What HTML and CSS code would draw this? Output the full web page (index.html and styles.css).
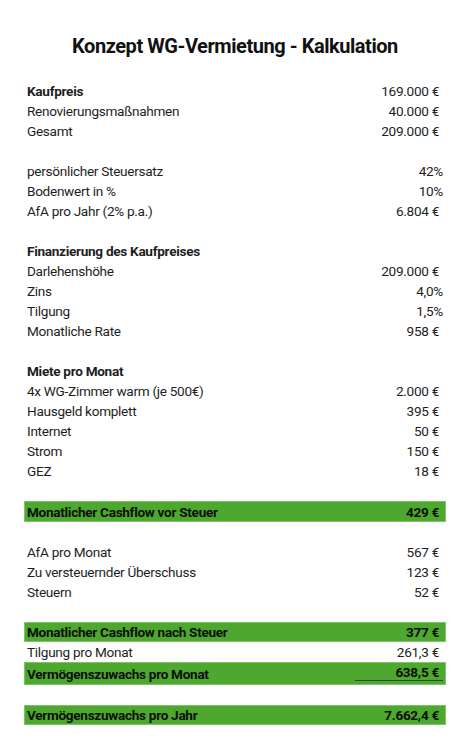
FILE: index.html
```html
<!DOCTYPE html>
<html lang="de">
<head>
<meta charset="utf-8">
<title>Konzept WG-Vermietung - Kalkulation</title>
<link rel="stylesheet" href="styles.css">
</head>
<body>
<div class="sheet">
  <h1 class="title">Konzept WG-Vermietung - Kalkulation</h1>
  <div class="table">
    <div class="row"><span class="label bold">Kaufpreis</span><span class="val">169.000 €</span></div>
    <div class="row"><span class="label">Renovierungsmaßnahmen</span><span class="val">40.000 €</span></div>
    <div class="row"><span class="label">Gesamt</span><span class="val">209.000 €</span></div>
    <div class="row"></div>
    <div class="row"><span class="label">persönlicher Steuersatz</span><span class="val pct">42%</span></div>
    <div class="row"><span class="label">Bodenwert in %</span><span class="val pct">10%</span></div>
    <div class="row"><span class="label">AfA pro Jahr (2% p.a.)</span><span class="val">6.804 €</span></div>
    <div class="row"></div>
    <div class="row"><span class="label bold">Finanzierung des Kaufpreises</span></div>
    <div class="row"><span class="label">Darlehenshöhe</span><span class="val">209.000 €</span></div>
    <div class="row"><span class="label">Zins</span><span class="val pct">4,0%</span></div>
    <div class="row"><span class="label">Tilgung</span><span class="val pct">1,5%</span></div>
    <div class="row"><span class="label">Monatliche Rate</span><span class="val">958 €</span></div>
    <div class="row"></div>
    <div class="row"><span class="label bold">Miete pro Monat</span></div>
    <div class="row"><span class="label">4x WG-Zimmer warm (je 500€)</span><span class="val">2.000 €</span></div>
    <div class="row"><span class="label">Hausgeld komplett</span><span class="val">395 €</span></div>
    <div class="row"><span class="label">Internet</span><span class="val">50 €</span></div>
    <div class="row"><span class="label">Strom</span><span class="val">150 €</span></div>
    <div class="row"><span class="label">GEZ</span><span class="val">18 €</span></div>
    <div class="row"></div>
    <div class="row green bold tall1"><span class="label">Monatlicher Cashflow vor Steuer</span><span class="val">429 €</span></div>
    <div class="row"></div>
    <div class="row"><span class="label">AfA pro Monat</span><span class="val">567 €</span></div>
    <div class="row"><span class="label">Zu versteuernder Überschuss</span><span class="val">123 €</span></div>
    <div class="row"><span class="label">Steuern</span><span class="val">52 €</span></div>
    <div class="row"></div>
    <div class="row green bold"><span class="label">Monatlicher Cashflow nach Steuer</span><span class="val">377 €</span></div>
    <div class="row"><span class="label">Tilgung pro Monat</span><span class="val">261,3 €</span></div>
    <div class="row green bold tall2"><span class="label">Vermögenszuwachs pro Monat</span><span class="val sum">638,5 €</span></div>
    <div class="row"></div>
    <div class="row green bold"><span class="label">Vermögenszuwachs pro Jahr</span><span class="val">7.662,4 €</span></div>
  </div>
</div>
</body>
</html>
```
FILE: styles.css
```css
html, body {
  margin: 0;
  padding: 0;
  background: #ffffff;
}
body {
  font-family: Roboto, "Liberation Sans", sans-serif;
  color: #1e1e1e;
}
.sheet {
  width: 468px;
  padding-top: 33px;
}
.title {
  margin: 0 0 0 24px;
  width: 422px;
  height: 48px;
  font-size: 20px;
  letter-spacing: -0.45px;
  font-weight: 700;
  text-align: center;
  line-height: 26px;
  color: #111;
}
.table {
  margin-left: 24px;
  width: 422px;
  display: flex;
  flex-direction: column;
}
.row {
  height: 20px;
  display: flex;
  align-items: center;
  justify-content: space-between;
  font-size: 13.6px;
  letter-spacing: -0.3px;
  padding: 0 7px 0 3px;
  box-sizing: border-box;
}
.bold {
  font-weight: 700;
}
.val.pct {
  margin-right: -4px;
}
.green {
  background: #4ea72e;
  color: #0a1008;
  border: 1px solid #7cc466;
  padding: 0 6px 0 2px;
}
.tall1 {
  height: 21px;
}
.tall2 {
  height: 23px;
}
.val.sum {
  width: 84px;
  align-self: stretch;
  display: flex;
  align-items: center;
  justify-content: flex-end;
  border-bottom: 1px solid #2f4a22;
  margin-right: -4px;
  padding-right: 4px;
  margin-bottom: 3px;
}
```
